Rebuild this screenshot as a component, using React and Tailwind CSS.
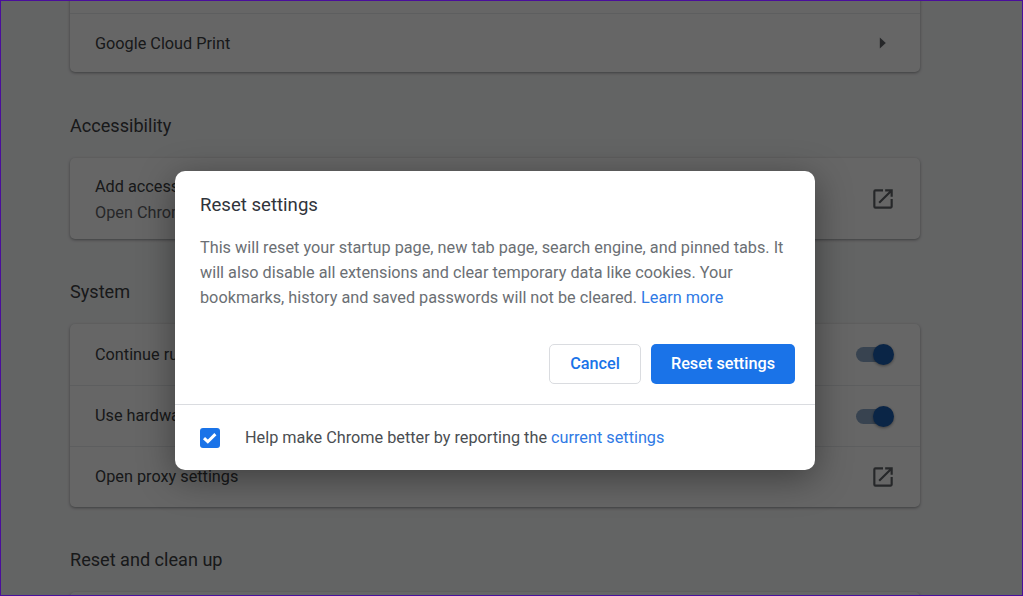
import React from 'react';

function OpenIcon() {
  return (
    <svg width="26" height="26" viewBox="0 0 24 24" fill="#5f6368" className="mr-[-2px]">
      <path d="M19 19H5V5h7V3H5a2 2 0 0 0-2 2v14a2 2 0 0 0 2 2h14c1.1 0 2-.9 2-2v-7h-2v7zM14 3v2h3.59l-9.83 9.83 1.41 1.41L19 6.41V10h2V3h-7z" />
    </svg>
  );
}

function Toggle() {
  return (
    <div className="relative w-[35px] h-[15px] rounded-full bg-[#8ca8c8] mr-[3px]">
      <div className="absolute right-[-3px] top-[-3px] w-[21px] h-[21px] rounded-full bg-[#1a5cb0] shadow-[0_1px_3px_rgba(0,0,0,0.4)]" />
    </div>
  );
}

function Row({ title, right, first, height = 'h-[61px]', textClass = '' }) {
  return (
    <div className={`flex items-center justify-between ${height} pl-[25px] pr-[26px] ${first ? '' : 'border-t border-[#e8eaed]'}`}>
      <div className={`text-[16.25px] leading-[26px] text-[#3c4043] ${textClass}`}>{title}</div>
      {right}
    </div>
  );
}

function Card({ children, className = '' }) {
  return (
    <div className={`w-[850px] bg-white rounded-[5px] shadow-[0_1px_3px_rgba(60,64,67,0.5)] ${className}`}>
      {children}
    </div>
  );
}

function Heading({ children, className = '' }) {
  return <h2 className={`text-[18.1px] leading-[24px] text-[#3c4043] ${className}`}>{children}</h2>;
}

export default function App() {
  return (
    <div
      className="relative w-[1023px] h-[596px] overflow-hidden bg-[#f8f9fa]"
      style={{ fontFamily: 'Roboto, "Liberation Sans", sans-serif' }}
    >
      {/* settings page underneath */}
      <div className="pl-[70px] mt-[-48px]">
        <Card>
          <div className="h-[61px]" />
          <Row
            title="Google Cloud Print"
            height="h-[59px]"
            textClass="pt-[2px]"
            right={
              <svg width="26" height="26" viewBox="0 0 24 24" fill="#5f6368" className="mr-[-1px]">
                <path d="M10 7v10l5.5-5z" />
              </svg>
            }
          />
        </Card>
        <Heading className="mt-[42px]">Accessibility</Heading>
        <Card className="mt-[20px]">
          <div className="flex items-center justify-between h-[81px] pl-[25px] pr-[26px]">
            <div className="pt-[2px]">
              <div className="text-[16.25px] leading-[26px] text-[#3c4043]">Add accessibility features</div>
              <div className="text-[16.25px] leading-[26px] text-[#5f6368]">Open Chrome Web Store</div>
            </div>
            <OpenIcon />
          </div>
        </Card>
        <Heading className="mt-[41px]">System</Heading>
        <Card className="mt-[20px]">
          <Row first title="Continue running background apps" right={<Toggle />} />
          <Row title="Use hardware acceleration when available" right={<Toggle />} />
          <Row title="Open proxy settings" right={<OpenIcon />} />
        </Card>
        <Heading className="mt-[41px]">Reset and clean up</Heading>
        <Card className="mt-[20px] h-[60px]" />
      </div>

      {/* backdrop */}
      <div className="absolute inset-0 bg-black/60" />

      {/* dialog */}
      <div className="absolute left-[175px] top-[171px] w-[640px] h-[299px] bg-white rounded-[10px] shadow-[0_8px_36px_rgba(0,0,0,0.4)]">
        <div className="pl-[25px] pr-[20px] pt-[22px]">
          <h1 className="text-[18.6px] leading-[24px] text-[#30343a]">Reset settings</h1>
          <p className="mt-[18px] text-[16.25px] leading-[25px] text-[#6b6f74]">
            This will reset your startup page, new tab page, search engine, and pinned tabs. It
            <br />
            will also disable all extensions and clear temporary data like cookies. Your
            <br />
            bookmarks, history and saved passwords will not be cleared.{' '}
            <a className="text-[#2f7ae5]">Learn more</a>
          </p>
        </div>
        <div className="flex justify-end gap-[10px] pr-[20px] mt-[34px]">
          <button className="w-[92px] h-[40px] rounded-[5px] border border-[#dadce0] bg-white text-[16.25px] font-medium text-[#1a73e8]">
            Cancel
          </button>
          <button className="w-[144px] h-[40px] rounded-[5px] bg-[#1a73e8] text-[16.25px] font-medium text-white">
            Reset settings
          </button>
        </div>
        <div className="flex items-center h-[66px] mt-[20px] pl-[25px] border-t border-[#dadce0]">
          <div className="flex items-center justify-center w-5 h-5 rounded-[3px] bg-[#1a73e8]">
            <svg width="16" height="16" viewBox="0 0 16 16" fill="none" stroke="white" strokeWidth="3">
              <path d="M2 8.2l3.8 3.5 7.6-7.6" />
            </svg>
          </div>
          <span className="ml-[25px] pt-[2px] text-[16.25px] text-[#4a4e52]">
            Help make Chrome better by reporting the <a className="text-[#2f7ae5]">current settings</a>
          </span>
        </div>
      </div>

      {/* window edge */}
      <div className="absolute inset-0 border border-[#4a0e9c] pointer-events-none" />
    </div>
  );
}
